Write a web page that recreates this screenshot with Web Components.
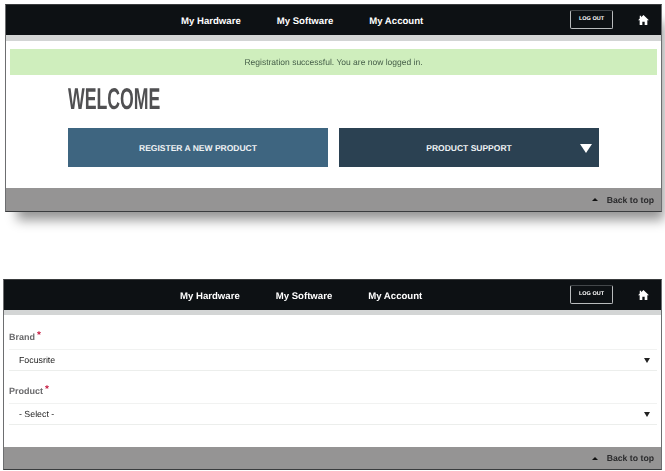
<!DOCTYPE html>
<html lang="en">
<head>
<meta charset="utf-8">
<title>Product registration</title>
<style>
  html, body { margin: 0; padding: 0; background: #fff; overflow: hidden; }
  body { font-family: "Liberation Sans", Arial, sans-serif; height: 471px; text-rendering: geometricPrecision; }
  /* the reference is a soft scan, so take the edge off everything */
  .stack { display: flex; flex-direction: column; padding-top: 4px; filter: blur(0.35px); }
</style>
</head>
<body>
<div class="stack">
  <site-panel shadowed style="--panel-height:208px; --panel-left:5px; --nav-left:175px; margin-bottom:67px">
    <flash-message>Registration successful. You are now logged in.</flash-message>
    <welcome-block></welcome-block>
  </site-panel>
  <site-panel style="--panel-height:191px; --panel-left:3px; --nav-left:176px; --bar-height:30px; --strip-height:5px; --footer-height:22px">
    <product-form></product-form>
  </site-panel>
</div>

<script>
class SiteHeader extends HTMLElement {
    constructor() {
        super();
        this.attachShadow({ mode: 'open' });
        this.shadowRoot.innerHTML = `
      <style>
        :host { display: block; flex: none; }
        .bar {
          height: var(--bar-height, 30px);
          background: #0d1114;
          display: grid;
          grid-template-columns: var(--nav-left, 175px) auto 1fr auto auto;
          align-items: center;
        }
        nav { display: flex; gap: 36px; padding-top: 2px; }
        nav a { color: #fff; font: bold 9.6px "Liberation Sans", Arial, sans-serif; white-space: nowrap; }
        .logout {
          grid-column: 4;
          width: 43px;
          height: 19px;
          margin: 0 25px 2px 0;
          box-sizing: border-box;
          border: 1px solid #b9bcbd;
          border-top-color: #43474a;
          border-radius: 2px;
          color: #fff;
          font: bold 5.5px/17px "Liberation Sans", Arial, sans-serif;
          text-align: center;
        }
        .home { grid-column: 5; width: 11px; height: 10px; margin-right: 12px; display: block; }
        .strip { height: var(--strip-height, 6px); background: #d3d5d5; }
      </style>
      <div class="bar">
        <span></span>
        <nav><a>My Hardware</a><a>My Software</a><a>My Account</a></nav>
        <div class="logout">LOG OUT</div>
        <svg class="home" viewBox="0 0 13 12"><path fill="#fff" d="M6.5 0 13 6.2h-1.900V12H7.900V8H5.100v4H1.900V6.200H0L2 4.300V1h1.700v1.700z"/></svg>
      </div>
      <div class="strip"></div>
    `;
    }
}

class SiteFooter extends HTMLElement {
    constructor() {
        super();
        this.attachShadow({ mode: 'open' });
        this.shadowRoot.innerHTML = `
      <style>
        :host { display: block; flex: none; }
        .foot {
          height: var(--footer-height, 23px);
          background: #959494;
          display: flex;
          justify-content: flex-end;
          align-items: center;
          gap: 9px;
          padding-right: 7px;
          color: #2b2b2d;
          font: bold 8.7px "Liberation Sans", Arial, sans-serif;
        }
        i { width: 0; height: 0; border: 3px solid transparent; border-top: 0; border-bottom: 3px solid #111; }
      </style>
      <div class="foot"><i></i><span>Back to top</span></div>
    `;
    }
}

class SitePanel extends HTMLElement {
    constructor() {
        super();
        this.attachShadow({ mode: 'open' });
        this.shadowRoot.innerHTML = `
      <style>
        :host {
          display: flex;
          flex-direction: column;
          box-sizing: border-box;
          height: var(--panel-height);
          margin-left: var(--panel-left);
          margin-right: 3px;
          border: 1px solid #3a3c3e;
          border-left-color: #6d6e70;
          border-right-color: #6d6e70;
          background: #fff;
        }
        :host([shadowed]) { box-shadow: 7px 13px 11px -5px rgba(0,0,0,.42); }
        main { flex: 1; min-height: 0; }
      </style>
      <site-header></site-header>
      <main><slot></slot></main>
      <site-footer></site-footer>
    `;
    }
}

class FlashMessage extends HTMLElement {
    constructor() {
        super();
        this.attachShadow({ mode: 'open' });
        this.shadowRoot.innerHTML = `
      <style>
        :host {
          display: block;
          margin: 8px 4px 0;
          height: 26px;
          background: #cfeebd;
          color: #47604a;
          font: 8.5px/26px "Liberation Sans", Arial, sans-serif;
          text-align: center;
        }
      </style>
      <slot></slot>
    `;
    }
}

class ActionButton extends HTMLElement {
    constructor() {
        super();
        this.attachShadow({ mode: 'open' });
        this.shadowRoot.innerHTML = `
      <style>
        :host {
          display: flex;
          position: relative;
          align-items: center;
          justify-content: center;
          height: 39px;
          background: var(--button-bg);
          color: #eef2f4;
          font: bold 8.5px "Liberation Sans", Arial, sans-serif;
        }
        svg { position: absolute; right: 7px; top: 16px; width: 12px; height: 9px; display: none; }
        :host([menu]) svg { display: block; }
      </style>
      <slot></slot>
      <svg viewBox="0 0 12 9"><path fill="#fff" d="M0 0h12L6 9z"/></svg>
    `;
    }
}

class WelcomeBlock extends HTMLElement {
    constructor() {
        super();
        this.attachShadow({ mode: 'open' });
        this.shadowRoot.innerHTML = `
      <style>
        :host { display: block; padding: 10px 0 0 62px; }
        h1 {
          margin: 0 0 13px;
          height: 30px;
          color: #505052;
          font: bold 30px/30px "Liberation Sans", Arial, sans-serif;
          transform: scaleX(0.59);
          transform-origin: left center;
          white-space: nowrap;
        }
        .row { display: grid; grid-template-columns: 260px 260px; gap: 11px; }
        action-button:first-child { --button-bg: #3e6580; }
        action-button:last-child { --button-bg: #2b4152; }
      </style>
      <h1>WELCOME</h1>
      <div class="row">
        <action-button>REGISTER A NEW PRODUCT</action-button>
        <action-button menu>PRODUCT SUPPORT</action-button>
      </div>
    `;
    }
}

class FormSelect extends HTMLElement {
    static get observedAttributes() { return ['label', 'value']; }
    constructor() {
        super();
        this.attachShadow({ mode: 'open' });
        this.shadowRoot.innerHTML = `
      <style>
        :host { display: block; }
        label {
          display: flex;
          gap: 2px;
          height: 16px;
          color: #6a6a6c;
          font: bold 9px/14px "Liberation Sans", Arial, sans-serif;
        }
        b { color: #c4123a; font-size: 10px; position: relative; top: -1px; }
        .field {
          height: 22px;
          margin-top: 3px;
          margin-right: 4px;
          box-sizing: border-box;
          border-top: 1px solid #f1f2f1;
          border-bottom: 1px solid #eceeec;
          display: flex;
          align-items: center;
          justify-content: space-between;
          padding: 0 7px 0 10px;
          color: #222;
          font: 8.8px "Liberation Sans", Arial, sans-serif;
        }
        i { width: 0; height: 0; border: 3px solid transparent; border-bottom: 0; border-top: 5px solid #222; }
      </style>
      <label><span class="name"></span><b>*</b></label>
      <div class="field"><span class="value"></span><i></i></div>
    `;
    }

    attributeChangedCallback(name, oldValue, newValue) {
        const target = name === 'label' ? '.name' : '.value';
        this.shadowRoot.querySelector(target).textContent = newValue;
    }
}

class ProductForm extends HTMLElement {
    constructor() {
        super();
        this.attachShadow({ mode: 'open' });
        this.shadowRoot.innerHTML = `
      <style>
        :host { display: flex; flex-direction: column; gap: 13px; padding: 15px 0 0 5px; }
      </style>
      <form-select label="Brand" value="Focusrite"></form-select>
      <form-select label="Product" value="- Select -"></form-select>
    `;
    }
}

window.customElements.define('site-header', SiteHeader);
window.customElements.define('site-footer', SiteFooter);
window.customElements.define('site-panel', SitePanel);
window.customElements.define('flash-message', FlashMessage);
window.customElements.define('action-button', ActionButton);
window.customElements.define('welcome-block', WelcomeBlock);
window.customElements.define('form-select', FormSelect);
window.customElements.define('product-form', ProductForm);
</script>
</body>
</html>
